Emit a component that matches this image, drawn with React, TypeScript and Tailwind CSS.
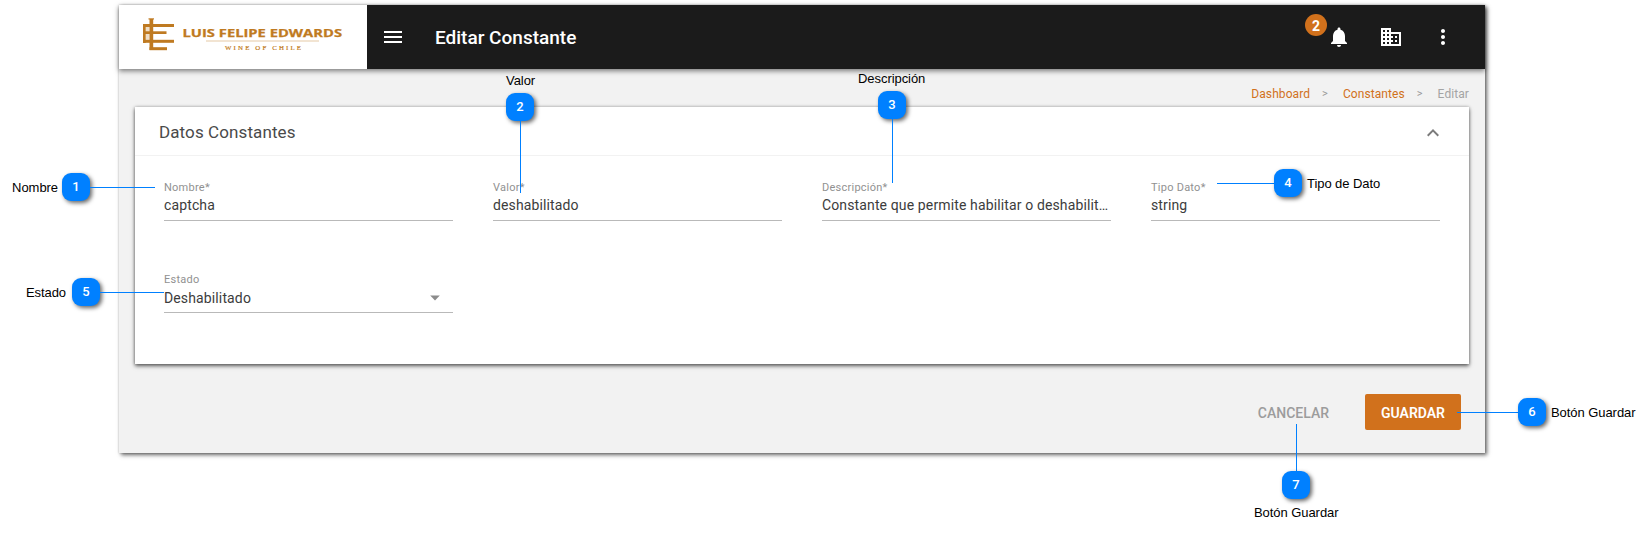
import type { ReactNode } from "react";
import { MdMenu, MdNotifications, MdBusiness, MdMoreVert, MdExpandLess, MdArrowDropDown } from "react-icons/md";

function Logo() {
  return (
    <div className="flex h-16 w-[248px] shrink-0 bg-white pl-6">
      <svg className="mt-[13px] h-9 w-[206px]" viewBox="0 0 206 36" fill="#bf7a21">
        <rect x="0" y="6" width="2.700" height="19" />
        <rect x="6.500" y="1" width="3.700" height="31" />
        <rect x="0" y="6" width="31" height="3" />
        <rect x="0" y="13.300" width="23.500" height="2.700" />
        <rect x="0" y="21.800" width="31" height="3" />
        <rect x="6.500" y="29.200" width="17.500" height="3" />
        <rect x="5.500" y="0.300" width="5.500" height="1.200" />
        <rect x="2.700" y="9" width="3.800" height="12.800" opacity=".25" />
        <text x="39.500" y="19" fontSize="10.800" fontWeight="700" stroke="#bf7a21" strokeWidth=".25" fontFamily="Open Sans, sans-serif" textLength="159.500" lengthAdjust="spacingAndGlyphs">LUIS FELIPE EDWARDS</text>
        <rect x="63" y="22.500" width="113" height="1" opacity=".4" />
        <text x="82" y="32" fontSize="6.800" stroke="#bf7a21" strokeWidth=".2" fontFamily="Liberation Serif, serif" textLength="76">WINE OF CHILE</text>
      </svg>
    </div>
  );
}

function Header() {
  return (
    <header className="flex h-16 items-center bg-[#1b1b1b] text-white shadow-[0_2px_5px_rgba(0,0,0,0.5)]">
      <Logo />
      <MdMenu className="ml-[14px] size-6" />
      <h1 className="ml-[30px] flex-1 pt-[2px] text-[19px] font-medium">Editar Constante</h1>
      <div className="relative mr-7 size-6">
        <MdNotifications className="size-6" />
        <span className="absolute -top-[11px] -left-[22px] flex size-[22px] items-center justify-center rounded-full bg-[#d1711c] pt-px text-[14px] leading-none font-bold">2</span>
      </div>
      <MdBusiness className="mr-7 size-6" />
      <MdMoreVert className="mr-[30px] size-6" />
    </header>
  );
}

function Field({ label, value, select = false }: { label: string; value: string; select?: boolean }) {
  return (
    <div className="h-[92px]">
      <div className="h-[42px] border-b border-[#b9b9b9] pt-px">
        <div className="h-[15px] text-[11px] leading-[16px] tracking-[0.25px] text-[#919191]">{label}</div>
        <div className={`flex h-5 items-center justify-between text-[14px] leading-5 tracking-[0.13px] text-[#3c3c3c] ${select ? "mt-px" : ""}`}>
          <span className="truncate">{value}</span>
          {select && <MdArrowDropDown className="mr-[6px] size-6 shrink-0 pb-px text-[#8c8c8c]" />}
        </div>
      </div>
    </div>
  );
}

function Marker({ n }: { n: number }) {
  return (
    <span className="flex size-7 shrink-0 items-center justify-center rounded-[9px] bg-[#0080ff] text-[13px] font-medium text-white shadow-[2px_2px_4px_rgba(0,0,0,0.6)]">
      {n}
    </span>
  );
}

function Caption({ children }: { children: ReactNode }) {
  return (
    <span className="pt-px font-['Liberation_Sans',sans-serif] text-[13px] leading-4 tracking-[-0.06px] whitespace-nowrap text-black">
      {children}
    </span>
  );
}

function HLine({ className }: { className: string }) {
  return <i className={`mt-px h-px bg-[#0080ff] ${className}`} />;
}

function VLine({ className }: { className: string }) {
  return <i className={`w-px bg-[#0080ff] ${className}`} />;
}

export default function App() {
  return (
    <div className="relative h-[536px] w-[1651px] overflow-hidden bg-white pt-[5px] pl-[119px] font-[Roboto,sans-serif]">
      <div className="h-[448px] w-[1366px] bg-[#f2f2f2] shadow-[2px_2px_4px_rgba(0,0,0,0.6),0_0_2px_rgba(0,0,0,0.2)]">
        <Header />
        <nav className="flex h-[38px] items-end justify-end pr-4 pb-[5px] text-[12px] leading-4 tracking-[0.08px]">
          <a className="text-[#d1711c]">Dashboard</a>
          <span className="mr-[15px] ml-[12px] text-[11px] text-[#999]">&gt;</span>
          <a className="text-[#d1711c]">Constantes</a>
          <span className="mr-[15px] ml-[12px] text-[11px] text-[#999]">&gt;</span>
          <span className="text-[#a4a4a4]">Editar</span>
        </nav>
        <section className="mx-4 h-[257px] bg-white shadow-[0_2px_4px_rgba(0,0,0,0.6),0_0_3px_rgba(0,0,0,0.25)]">
          <div className="flex h-[49px] items-center justify-between border-b border-[#f2f2f2] pt-[3px] pr-6 pl-6">
            <h2 className="text-[17px] tracking-[0.1px] text-[#4a4a4a]">Datos Constantes</h2>
            <MdExpandLess className="size-6 text-[#7b7b7b]" />
          </div>
          <div className="grid grid-cols-[repeat(4,289px)] gap-x-10 pt-[23px] pl-[29px]">
            <Field label="Nombre*" value="captcha" />
            <Field label="Valor*" value="deshabilitado" />
            <Field label="Descripción*" value="Constante que permite habilitar o deshabilit…" />
            <Field label="Tipo Dato*" value="string" />
            <Field label="Estado" value="Deshabilitado" select />
          </div>
        </section>
        <div className="flex justify-end gap-9 pt-[30px] pr-6 text-[14px] font-medium">
          <button className="h-9 pt-[3px] text-[#9c9c9c]">CANCELAR</button>
          <button className="h-9 w-24 rounded-[2px] bg-[#d1711c] pt-[3px] font-semibold text-white">GUARDAR</button>
        </div>
      </div>

      <div className="absolute top-[173px] left-0 flex w-[155px] items-center justify-end">
        <Caption>Nombre</Caption>
        <span className="ml-1 flex items-center">
          <Marker n={1} />
          <HLine className="w-[65px]" />
        </span>
      </div>

      <div className="absolute top-[72px] left-[506px] flex flex-col gap-1">
        <Caption>Valor</Caption>
        <div>
          <Marker n={2} />
          <VLine className="ml-[14px] block h-[72px]" />
        </div>
      </div>

      <div className="absolute top-[70px] left-[858px] flex flex-col gap-1">
        <Caption>Descripción</Caption>
        <div className="pl-5">
          <Marker n={3} />
          <VLine className="ml-[14px] block h-16" />
        </div>
      </div>

      <div className="absolute top-[169px] left-[1217px] flex items-center">
        <HLine className="w-[57px]" />
        <Marker n={4} />
        <span className="ml-[5px] flex"><Caption>Tipo de Dato</Caption></span>
      </div>

      <div className="absolute top-[278px] left-0 flex w-[164px] items-center justify-end">
        <Caption>Estado</Caption>
        <span className="ml-[6px] flex items-center">
          <Marker n={5} />
          <HLine className="w-16" />
        </span>
      </div>

      <div className="absolute top-[398px] left-[1457px] flex items-center">
        <HLine className="w-[61px]" />
        <Marker n={6} />
        <span className="ml-[5px] flex"><Caption>Botón Guardar</Caption></span>
      </div>

      <div className="absolute top-[424px] left-[1254px] flex flex-col gap-[5px]">
        <div className="pl-7">
          <VLine className="ml-[14px] block h-[47px]" />
          <Marker n={7} />
        </div>
        <Caption>Botón Guardar</Caption>
      </div>
    </div>
  );
}
